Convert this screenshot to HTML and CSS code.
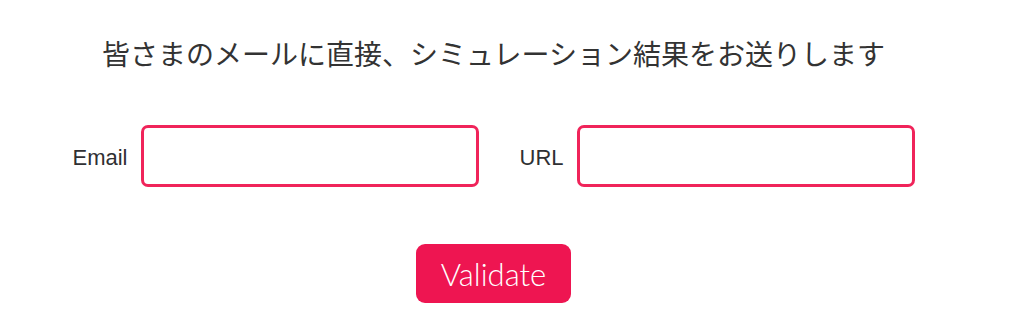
FILE: index.html
```html
<!DOCTYPE html>
<html lang="ja">
<head>
  <meta charset="UTF-8">
  <meta name="viewport" content="width=device-width, initial-scale=1.0">
  <title>Simulation</title>
  <link rel="stylesheet" href="styles.css">
</head>
<body>
  <div class="wrap">
    <h2 class="title">皆さまのメールに直接、シミュレーション結果をお送りします</h2>
    <form class="send-form" onsubmit="return false">
      <div class="fields">
        <label class="field">
          <span class="field-label">Email</span>
          <input type="email" class="field-input">
        </label>
        <label class="field">
          <span class="field-label">URL</span>
          <input type="text" class="field-input">
        </label>
      </div>
      <button type="submit" class="btn">Validate</button>
    </form>
  </div>
</body>
</html>
```

FILE: styles.css
```css
body {
  margin: 0;
  background: #fff;
  font-family: "Liberation Sans", Arial, "Noto Sans CJK JP", sans-serif;
  color: #333;
}

.wrap {
  width: 971px;
  margin: 0 8px;
  padding-top: 34px;
}

.title {
  margin: 0;
  text-align: center;
  font-family: "Noto Sans CJK JP", sans-serif;
  font-weight: 400;
  font-size: 28px;
  line-height: 38px;
  color: #333;
}

.send-form {
  display: flex;
  flex-direction: column;
  align-items: center;
  margin-top: 53px;
}

.fields {
  display: flex;
  gap: 41px;
}

.field {
  display: flex;
  align-items: center;
  gap: 13px;
}

.field-label {
  padding-top: 3px;
  font-size: 22px;
  color: #2f3033;
}

.field-input {
  width: 338px;
  height: 62px;
  box-sizing: border-box;
  border: 3px solid #f0245a;
  border-radius: 7px;
  padding: 0 10px;
  font-size: 18px;
  outline: none;
}

.btn {
  margin-top: 57px;
  width: 155px;
  height: 59px;
  border: none;
  border-radius: 9px;
  background-color: #ee1551;
  color: #fff;
  font-family: Lato, "Open Sans", sans-serif;
  font-weight: 300;
  font-size: 31px;
  cursor: pointer;
}
```
